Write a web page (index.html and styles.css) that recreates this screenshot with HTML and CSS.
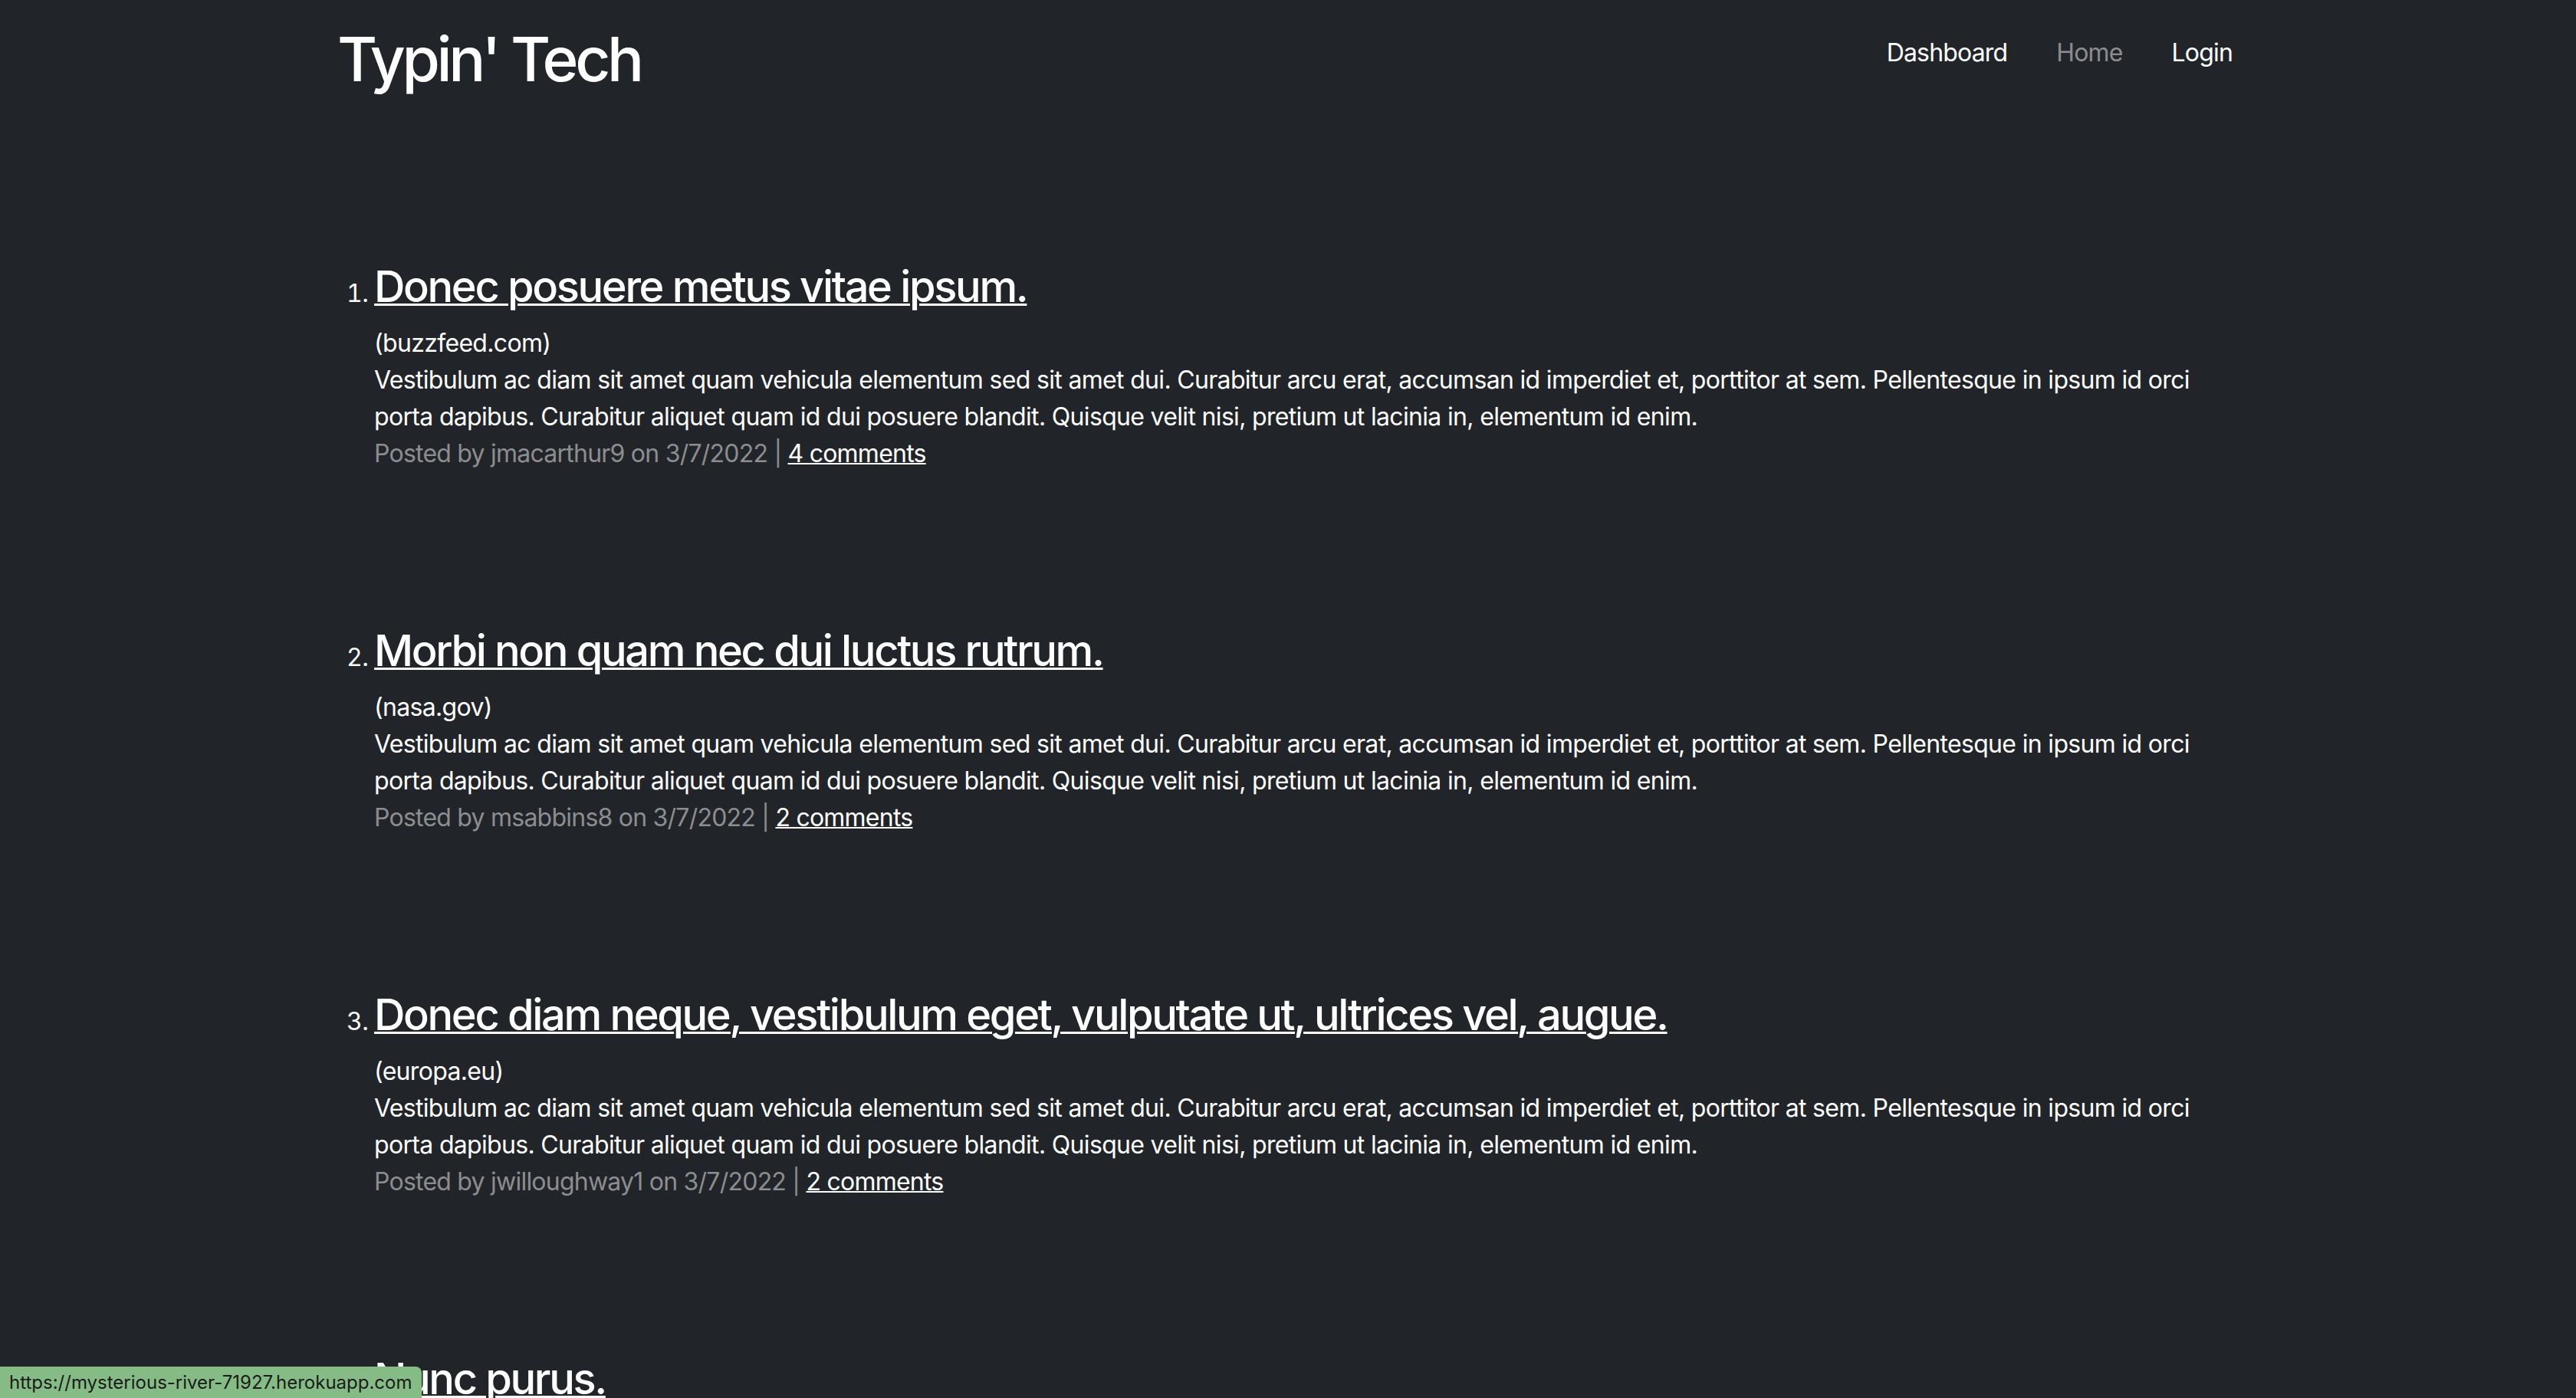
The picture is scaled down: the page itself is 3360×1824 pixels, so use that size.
FILE: index.html
```html
<!DOCTYPE html>
<html lang="en">
<head>
<meta charset="utf-8">
<title>Typin' Tech</title>
<link rel="stylesheet" href="styles.css">
</head>
<body>
<div class="container">
  <header class="site-header">
    <h1 class="brand">Typin' Tech</h1>
    <nav class="nav">
      <a class="nav-link" href="#">Dashboard</a>
      <a class="nav-link muted" href="#">Home</a>
      <a class="nav-link" href="#">Login</a>
    </nav>
  </header>
  <main class="main">
    <ol class="posts">
      <li class="post">
        <h3 class="post-title"><a href="#">Donec posuere metus vitae ipsum.</a></h3>
        <div class="post-domain">(buzzfeed.com)</div>
        <div class="post-body">Vestibulum ac diam sit amet quam vehicula elementum sed sit amet dui. Curabitur arcu erat, accumsan id imperdiet et, porttitor at sem. Pellentesque in ipsum id orci porta dapibus. Curabitur aliquet quam id dui posuere blandit. Quisque velit nisi, pretium ut lacinia in, elementum id enim.</div>
        <div class="post-meta">Posted by jmacarthur9 on 3/7/2022 | <a href="#">4 comments</a></div>
      </li>
      <li class="post">
        <h3 class="post-title"><a href="#">Morbi non quam nec dui luctus rutrum.</a></h3>
        <div class="post-domain">(nasa.gov)</div>
        <div class="post-body">Vestibulum ac diam sit amet quam vehicula elementum sed sit amet dui. Curabitur arcu erat, accumsan id imperdiet et, porttitor at sem. Pellentesque in ipsum id orci porta dapibus. Curabitur aliquet quam id dui posuere blandit. Quisque velit nisi, pretium ut lacinia in, elementum id enim.</div>
        <div class="post-meta">Posted by msabbins8 on 3/7/2022 | <a href="#">2 comments</a></div>
      </li>
      <li class="post">
        <h3 class="post-title"><a href="#">Donec diam neque, vestibulum eget, vulputate ut, ultrices vel, augue.</a></h3>
        <div class="post-domain">(europa.eu)</div>
        <div class="post-body">Vestibulum ac diam sit amet quam vehicula elementum sed sit amet dui. Curabitur arcu erat, accumsan id imperdiet et, porttitor at sem. Pellentesque in ipsum id orci porta dapibus. Curabitur aliquet quam id dui posuere blandit. Quisque velit nisi, pretium ut lacinia in, elementum id enim.</div>
        <div class="post-meta">Posted by jwilloughway1 on 3/7/2022 | <a href="#">2 comments</a></div>
      </li>
      <li class="post">
        <h3 class="post-title"><a href="#">Nunc purus.</a></h3>
        <div class="post-domain">(example.com)</div>
        <div class="post-body">Vestibulum ac diam sit amet quam vehicula elementum sed sit amet dui. Curabitur arcu erat, accumsan id imperdiet et, porttitor at sem. Pellentesque in ipsum id orci porta dapibus. Curabitur aliquet quam id dui posuere blandit. Quisque velit nisi, pretium ut lacinia in, elementum id enim.</div>
        <div class="post-meta">Posted by user on 3/7/2022 | <a href="#">1 comments</a></div>
      </li>
    </ol>
  </main>
</div>
<div class="status-bubble">https://mysterious-river-71927.herokuapp.com</div>
</body>
</html>
```

FILE: styles.css
```css
html, body {
  margin: 0;
  padding: 0;
  background: #212529;
}

body {
  font-family: Inter, "Noto Sans", "Liberation Sans", sans-serif;
  font-size: 32px;
  line-height: 48px;
  letter-spacing: -0.021em;
  color: #f8f9fa;
}

a {
  color: #ffffff;
}

.container {
  width: 2480px;
  margin: 0 auto;
}

.site-header {
  display: flex;
  justify-content: space-between;
  align-items: flex-start;
  padding-top: 29px;
}

.brand {
  margin: 0;
  font-size: 80px;
  line-height: 96px;
  font-weight: 500;
  letter-spacing: -0.055em;
  color: #ffffff;
}

.nav {
  display: flex;
  margin-right: -24px;
}

.nav-link {
  display: block;
  padding: 16px 32px;
  color: #ffffff;
  text-decoration: none;
  font-size: 32px;
  line-height: 48px;
  letter-spacing: -0.026em;
}

.nav-link.muted {
  color: #8c8d8f;
}

.main {
  padding-top: 216px;
}

.posts {
  margin: 0;
  padding-left: 48px;
}

.post {
  margin-bottom: 200px;
}

.post-title {
  margin: 0 0 16px 0;
  font-size: 56px;
  line-height: 67px;
  font-weight: 500;
  letter-spacing: -0.042em;
}

.post-title a {
  color: #ffffff;
  text-decoration: underline;
  text-decoration-thickness: 3px;
}

.post-domain,
.post-body {
  color: #ffffff;
}

.post-meta {
  color: #8c8d8f;
  letter-spacing: -0.024em;
}

.post-meta a {
  color: #ffffff;
  text-decoration-thickness: 2px;
}

.status-bubble {
  position: fixed;
  left: 0;
  bottom: 0;
  padding: 0 12px;
  height: 41px;
  line-height: 41px;
  font-size: 24px;
  letter-spacing: 0;
  color: #1b1b1b;
  background: #85bb85;
  border-top-right-radius: 8px;
}
```
